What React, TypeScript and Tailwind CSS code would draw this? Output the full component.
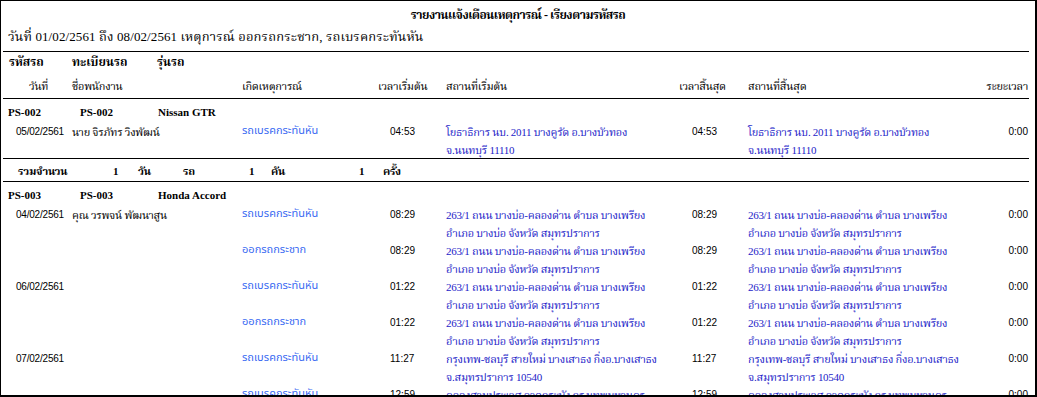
import React from 'react';

const serif = { fontFamily: "'Liberation Serif', 'Noto Serif Thai', 'Noto Sans Thai', serif" };
const sans = { fontFamily: "'Liberation Sans', 'Noto Sans Thai', sans-serif" };

interface EventRow {
  date: string;
  name: string;
  event: string;
  start: string;
  startPlace: string[];
  end: string;
  endPlace: string[];
  duration: string;
}

interface Group {
  code: string;
  plate: string;
  model: string;
  rows: EventRow[];
  summary?: boolean;
}

const bangBo = ['263/1 ถนน บางบ่อ-คลองด่าน ตำบล บางเพรียง', 'อำเภอ บางบ่อ จังหวัด สมุทรปราการ'];
const bangSaoThong = ['กรุงเทพ-ชลบุรี สายใหม่ บางเสาธง กิ่งอ.บางเสาธง', 'จ.สมุทรปราการ 10540'];
const ladKrabang = ['คลองสามประเวศ ลาดกระบัง กรุงเทพมหานคร', ''];
const bangBuaThong = ['โยธาธิการ นบ. 2011 บางคูรัด อ.บางบัวทอง', 'จ.นนทบุรี 11110'];

const groups: Group[] = [
  {
    code: 'PS-002',
    plate: 'PS-002',
    model: 'Nissan GTR',
    summary: true,
    rows: [
      { date: '05/02/2561', name: 'นาย จิรภัทร วิงพัฒน์', event: 'รถเบรคกระทันหัน', start: '04:53', startPlace: bangBuaThong, end: '04:53', endPlace: bangBuaThong, duration: '0:00' },
    ],
  },
  {
    code: 'PS-003',
    plate: 'PS-003',
    model: 'Honda Accord',
    rows: [
      { date: '04/02/2561', name: 'คุณ วรพจน์ พัฒนาสูน', event: 'รถเบรคกระทันหัน', start: '08:29', startPlace: bangBo, end: '08:29', endPlace: bangBo, duration: '0:00' },
      { date: '', name: '', event: 'ออกรถกระชาก', start: '08:29', startPlace: bangBo, end: '08:29', endPlace: bangBo, duration: '0:00' },
      { date: '06/02/2561', name: '', event: 'รถเบรคกระทันหัน', start: '01:22', startPlace: bangBo, end: '01:22', endPlace: bangBo, duration: '0:00' },
      { date: '', name: '', event: 'ออกรถกระชาก', start: '01:22', startPlace: bangBo, end: '01:22', endPlace: bangBo, duration: '0:00' },
      { date: '07/02/2561', name: '', event: 'รถเบรคกระทันหัน', start: '11:27', startPlace: bangSaoThong, end: '11:27', endPlace: bangSaoThong, duration: '0:00' },
      { date: '', name: '', event: 'รถเบรคกระทันหัน', start: '12:59', startPlace: ladKrabang, end: '12:59', endPlace: ladKrabang, duration: '0:00' },
    ],
  },
];

const cols = 'grid grid-cols-[63px_176px_130px_74px_226px_76px_236px_45px]';

const Rule = ({ className = '' }: { className?: string }) => (
  <div className={`border-t border-black ${className}`} />
);

const DataRow = ({ row }: { row: EventRow }) => (
  <div className={`${cols} leading-[18px] h-[36px]`}>
    <div className="text-right pr-[2px] text-[10px] tracking-[-0.2px] text-black" style={sans}>{row.date}</div>
    <div className="pl-[6px] text-[11px] tracking-[-0.3px] text-black" style={serif}>{row.name}</div>
    <div className="text-[11px] leading-[14px] text-[#3a6af2]" style={sans}>{row.event}</div>
    <div className="pl-[18px] text-[10px] text-black" style={sans}>{row.start}</div>
    <div className="text-[11px] tracking-[-0.3px] text-[#1c1cc8]" style={serif}>
      {row.startPlace.map((l, i) => <div key={i} className="h-[18px] whitespace-nowrap">{l}</div>)}
    </div>
    <div className="pl-[20px] text-[10px] text-black" style={sans}>{row.end}</div>
    <div className="text-[11px] tracking-[-0.3px] text-[#1c1cc8]" style={serif}>
      {row.endPlace.map((l, i) => <div key={i} className="h-[18px] whitespace-nowrap">{l}</div>)}
    </div>
    <div className="text-right pr-[1px] text-[10px] text-black" style={sans}>{row.duration}</div>
  </div>
);

const GroupHead = ({ g }: { g: Group }) => (
  <div className="flex leading-[18px] text-[11px] font-bold text-black" style={serif}>
    <span className="w-[77px] pl-[5px]">{g.code}</span>
    <span className="w-[78px]">{g.plate}</span>
    <span>{g.model}</span>
  </div>
);

const Summary = () => (
  <div className="flex leading-[18px] text-[11px] tracking-[-0.3px] font-bold text-black" style={serif}>
    <span className="w-[110px] pl-[15px]">รวมจำนวน</span>
    <span className="w-[25px]">1</span>
    <span className="w-[45px]">วัน</span>
    <span className="w-[66px]">รถ</span>
    <span className="w-[22px]">1</span>
    <span className="w-[88px]">คัน</span>
    <span className="w-[24px]">1</span>
    <span>ครั้ง</span>
  </div>
);

export default function App() {
  return (
    <div className="w-[1037px] h-[397px] overflow-hidden bg-white border-t border-l border-r-2 border-b-2 border-black">
      <div className="ml-[2px] w-[1026px] pt-[4px]">
        <div className="text-center pl-[4px] leading-[20px] text-[12px] tracking-[-0.5px] font-bold text-black" style={serif}>
          รายงานแจ้งเตือนเหตุการณ์ - เรียงตามรหัสรถ
        </div>
        <div className="mt-[3px] pl-[5px] leading-[18px] text-[13px] tracking-[0.1px] text-black" style={serif}>
          วันที่ 01/02/2561 ถึง 08/02/2561 เหตุการณ์ ออกรถกระชาก, รถเบรคกระทันหัน
        </div>
        <Rule className="mt-[5px]" />

        <div className="mt-[1px] flex leading-[18px] text-[12px] font-bold text-black" style={serif}>
          <span className="w-[69px] pl-[6px]">รหัสรถ</span>
          <span className="w-[85px]">ทะเบียนรถ</span>
          <span>รุ่นรถ</span>
        </div>
        <div className={`${cols} mt-[6px] leading-[18px] text-[11px] tracking-[-0.3px] text-black`} style={serif}>
          <div className="pl-[26px]">วันที่</div>
          <div className="pl-[6px]">ชื่อพนักงาน</div>
          <div>เกิดเหตุการณ์</div>
          <div className="pl-[6px]">เวลาเริ่มต้น</div>
          <div>สถานที่เริ่มต้น</div>
          <div className="pl-[7px]">เวลาสิ้นสุด</div>
          <div>สถานที่สิ้นสุด</div>
          <div className="text-right pr-[1px] whitespace-nowrap">ระยะเวลา</div>
        </div>
        <Rule className="mt-[3px]" />

        {groups.map((g) => (
          <div key={g.code}>
            <div className="mt-[4px]">
              <GroupHead g={g} />
            </div>
            <div className="mt-[2px]">
              {g.rows.map((r, i) => <DataRow key={i} row={r} />)}
            </div>
            {g.summary && (
              <>
                <Rule className="-mt-[1px]" />
                <div className="mt-[3px]">
                  <Summary />
                </div>
                <Rule className="mt-[1px]" />
              </>
            )}
          </div>
        ))}
      </div>
    </div>
  );
}
